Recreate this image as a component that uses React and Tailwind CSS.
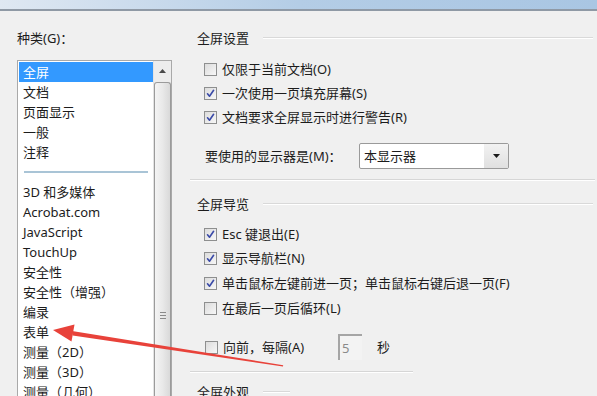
import React from 'react'

const font = "font-['Noto_Sans','Noto_Sans_CJK_SC',sans-serif]"

const categories = [
  '全屏',
  '文档',
  '页面显示',
  '一般',
  '注释',
  null, // separator
  '3D 和多媒体',
  'Acrobat.com',
  'JavaScript',
  'TouchUp',
  '安全性',
  '安全性（增强）',
  '编录',
  '表单',
  '测量（2D）',
  '测量（3D）',
  '测量（几何）',
]

function CheckBox({ checked }) {
  return (
    <span className="flex h-[13px] w-[13px] shrink-0 items-center justify-center border border-[#8e8f8f] bg-gradient-to-br from-[#dcdcdc] to-[#f7f7f7]">
      {checked ? (
        <svg width="9" height="9" viewBox="0 0 9 9" aria-hidden="true">
          <path d="M1.5 4.8l2 2.4L7.6 1.3" fill="none" stroke="#3a4aa8" strokeWidth="1.6" strokeLinecap="round" strokeLinejoin="round" />
        </svg>
      ) : null}
    </span>
  )
}

function CheckRow({ checked, label, h = 'h-[24px]' }) {
  return (
    <div className={'flex items-center gap-[5px] pl-[14px] ' + h}>
      <CheckBox checked={checked} />
      <span className="leading-none">{label}</span>
    </div>
  )
}

function GroupHeader({ label, className = '' }) {
  return (
    <div className={'flex h-[20px] items-center gap-[14px] pl-[7px] ' + className}>
      <span className="leading-none">{label}</span>
      <div className="h-[2px] flex-1 border-t border-[#d9d9d9] border-b-white" style={{ borderBottomWidth: 1 }} />
    </div>
  )
}

function Separator({ className = '' }) {
  return <div className={'h-[2px] border-t border-b border-t-[#d6d6d6] border-b-white ' + className} />
}

function ScrollBar() {
  return (
    <div className="flex w-[18px] shrink-0 flex-col border-l border-[#e3e3e3] bg-[#ededed]">
      <div className="flex h-[19px] items-center justify-center">
        <svg width="7" height="4" viewBox="0 0 7 4" aria-hidden="true">
          <path d="M0 4L3.5 0 7 4z" fill="#4a4a4a" />
        </svg>
      </div>
      <div className="mt-[2px] flex flex-1 flex-col items-center justify-end rounded-t-[3px] border border-b-0 border-[#9b9b9b] bg-gradient-to-r from-[#f4f4f4] via-[#e9e9e9] to-[#d9d9d9] pb-[80px]">
        <div className="flex flex-col gap-[2px]">
          <div className="h-px w-[6px] bg-[#8a8a8a]" />
          <div className="h-px w-[6px] bg-[#8a8a8a]" />
          <div className="h-px w-[6px] bg-[#8a8a8a]" />
        </div>
      </div>
    </div>
  )
}

export default function App() {
  return (
    <div className={'relative h-[396px] w-[597px] overflow-hidden bg-[#f0f0f0] text-[13px] text-[#1c1c1c] ' + font}>
      {/* window frame top */}
      <div className="h-[9px] bg-gradient-to-r from-[#dfe8f2] via-[#b4cde6] to-[#a9c6e3]" />
      <div className="h-[2px] bg-[#8f99a5]" />

      <div className="flex">
        {/* categories */}
        <div className="w-[190px] shrink-0 pl-[17px] pt-[17px]">
          <div className="flex h-[20px] items-center leading-none">种类(G)：</div>
          <div className="mt-[12px] flex h-[340px] w-[155px] border border-[#a9a9a9] bg-white">
            <div className="flex-1 pt-[1px] pl-[1px]">
              {categories.map((c, i) =>
                c === null ? (
                  <div key={i} className="flex h-[20px] items-center px-[5px]">
                    <div className="h-[2px] w-full bg-[#a9c4d6]" />
                  </div>
                ) : (
                  <div
                    key={i}
                    className={
                      'flex h-[20px] items-center pl-[4px] leading-none ' +
                      (i === 0 ? 'bg-[#3399ff] text-white' : '')
                    }
                  >
                    {c}
                  </div>
                ),
              )}
            </div>
            <ScrollBar />
          </div>
        </div>

        {/* settings */}
        <div className="flex-1 pr-[2px] pt-[17px]">
          <GroupHeader label="全屏设置" className="pr-[2px]" />
          <div className="mt-[9px]">
            <CheckRow checked={false} label="仅限于当前文档(O)" />
            <CheckRow checked label="一次使用一页填充屏幕(S)" />
            <CheckRow checked label="文档要求全屏显示时进行警告(R)" />
          </div>
          <div className="mt-[14px] flex h-[26px] items-center pl-[15px]">
            <span className="w-[154px] leading-none">要使用的显示器是(M)：</span>
            <div className="flex h-[26px] w-[150px] items-stretch rounded-[2px] border border-[#9a9a9a] bg-white">
              <span className="flex flex-1 items-center pl-[4px] leading-none">本显示器</span>
              <span className="flex w-[24px] items-center justify-center bg-gradient-to-b from-[#f2f2f2] to-[#e0e0e0]">
                <svg width="7" height="4" viewBox="0 0 7 4" aria-hidden="true">
                  <path d="M0 0h7L3.5 4z" fill="#1a1a1a" />
                </svg>
              </span>
            </div>
          </div>
          <Separator className="mt-[10px]" />

          <GroupHeader label="全屏导览" className="mt-[13px] pr-[2px]" />
          <div className="mt-[8px]">
            <CheckRow checked label="Esc 键退出(E)" />
            <CheckRow checked label="显示导航栏(N)" h="h-[25px]" />
            <CheckRow checked label="单击鼠标左键前进一页；单击鼠标右键后退一页(F)" h="h-[25px]" />
            <CheckRow checked={false} label="在最后一页后循环(L)" h="h-[25px]" />
          </div>
          <div className="mt-[13px] flex h-[26px] items-center pl-[15px]">
            <CheckBox checked={false} />
            <span className="ml-[5px] w-[115px] leading-none">向前，每隔(A)</span>
            <div className="flex h-[26px] w-[24px] items-center border-l-2 border-t-2 border-[#a5a5a5] bg-[#f3f3f3] pl-[2px] leading-none text-[#8a8a8a]">
              5
            </div>
            <span className="ml-[15px] leading-none">秒</span>
          </div>
          <Separator className="mt-[11px] w-[223px]" />
          <GroupHeader label="全屏外观" className="mt-[9px] w-[100px]" />
        </div>
      </div>

      {/* red annotation arrow */}
      <svg className="pointer-events-none absolute inset-0" width="597" height="396" viewBox="0 0 597 396" aria-hidden="true">
        <polygon points="72,331 72.6,335.4 283,366.6 283.2,365.2" fill="#e8423a" />
        <polygon points="53,330 74.5,324.5 71.5,341.5" fill="#e8423a" />
      </svg>
    </div>
  )
}
